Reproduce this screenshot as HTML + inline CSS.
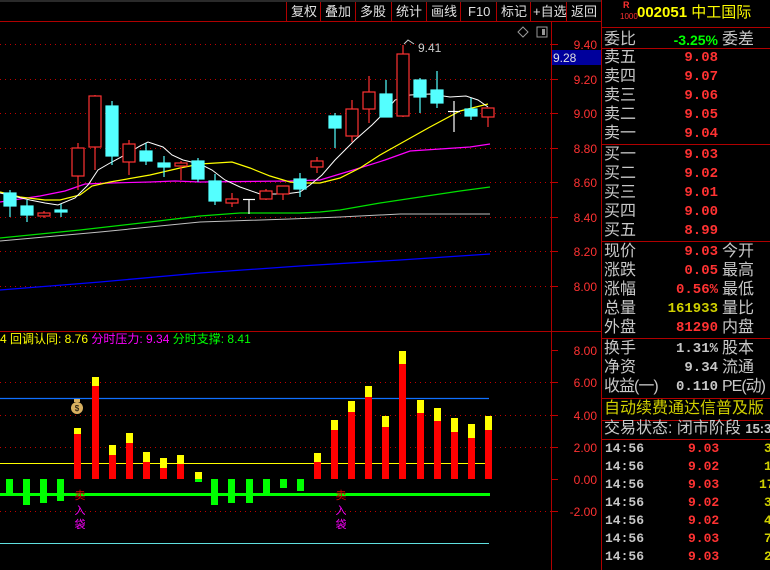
<!DOCTYPE html>
<html><head><meta charset="utf-8"><style>
body{margin:0;background:#000;width:770px;height:570px;overflow:hidden;position:relative;font-family:"Liberation Sans","Noto Sans CJK SC",sans-serif}
.a{position:absolute;white-space:nowrap;line-height:16px}
.lb{color:#c8c8c8;font-size:16px;left:604px}
.nr{color:#ff3232;font-weight:bold;font-size:14px;right:52px;font-family:"Liberation Mono","DejaVu Sans Mono",monospace}
.rl{color:#c8c8c8;font-size:16px;left:722px}
.hl{position:absolute;left:602px;width:168px;height:1px;background:#b00000}
.tk{color:#c8c8c8;font-weight:bold;font-size:13px;left:605px;font-family:"Liberation Mono",monospace}
.tp{color:#ff3232;font-weight:bold;font-size:13px;left:688px;font-family:"Liberation Mono",monospace}
.tv{color:#d0d000;font-weight:bold;font-size:13px;left:758px;font-family:"Liberation Mono",monospace}
</style></head><body>
<svg class="a" style="left:0;top:0;line-height:normal" width="602" height="570" viewBox="0 0 602 570" font-family="Liberation Sans,Noto Sans CJK SC,sans-serif">
<line x1="0" y1="1" x2="602" y2="1" stroke="#555" stroke-width="1"/>
<line x1="0" y1="21.5" x2="602" y2="21.5" stroke="#b00000"/>
<g stroke="#b00000"><line x1="286.5" y1="2" x2="286.5" y2="21"/><line x1="320.5" y1="2" x2="320.5" y2="21"/><line x1="355.5" y1="2" x2="355.5" y2="21"/><line x1="391.5" y1="2" x2="391.5" y2="21"/><line x1="426.5" y1="2" x2="426.5" y2="21"/><line x1="460.5" y1="2" x2="460.5" y2="21"/><line x1="496.5" y1="2" x2="496.5" y2="21"/><line x1="530.5" y1="2" x2="530.5" y2="21"/><line x1="566.5" y1="2" x2="566.5" y2="21"/></g>
<g fill="#e0e0e0" font-size="13"><text x="291" y="16">复权</text><text x="325" y="16">叠加</text><text x="360" y="16">多股</text><text x="396" y="16">统计</text><text x="431" y="16">画线</text><text x="468" y="16">F10</text><text x="501" y="16">标记</text><text x="533" y="16">+自选</text><text x="571" y="16">返回</text></g>
<line x1="551.5" y1="22" x2="551.5" y2="570" stroke="#b00000"/>
<line x1="0" y1="331.5" x2="602" y2="331.5" stroke="#b00000"/>
<g stroke="#c00000" stroke-dasharray="1,4"><line x1="0" y1="44.5" x2="551" y2="44.5"/><line x1="0" y1="79.5" x2="551" y2="79.5"/><line x1="0" y1="113.5" x2="551" y2="113.5"/><line x1="0" y1="148.5" x2="551" y2="148.5"/><line x1="0" y1="182.5" x2="551" y2="182.5"/><line x1="0" y1="217.5" x2="551" y2="217.5"/><line x1="0" y1="251.5" x2="551" y2="251.5"/><line x1="0" y1="286.5" x2="551" y2="286.5"/>
<line x1="0" y1="382.5" x2="551" y2="382.5"/><line x1="0" y1="415.5" x2="551" y2="415.5"/><line x1="0" y1="447.5" x2="551" y2="447.5"/><line x1="0" y1="511.5" x2="551" y2="511.5"/></g>
<g stroke="#c00000"><line x1="552" y1="44.5" x2="558" y2="44.5"/><line x1="552" y1="79.5" x2="558" y2="79.5"/><line x1="552" y1="113.5" x2="558" y2="113.5"/><line x1="552" y1="148.5" x2="558" y2="148.5"/><line x1="552" y1="182.5" x2="558" y2="182.5"/><line x1="552" y1="217.5" x2="558" y2="217.5"/><line x1="552" y1="251.5" x2="558" y2="251.5"/><line x1="552" y1="286.5" x2="558" y2="286.5"/><line x1="552" y1="350.5" x2="558" y2="350.5"/><line x1="552" y1="382.5" x2="558" y2="382.5"/><line x1="552" y1="415.5" x2="558" y2="415.5"/><line x1="552" y1="447.5" x2="558" y2="447.5"/><line x1="552" y1="479.5" x2="558" y2="479.5"/><line x1="552" y1="511.5" x2="558" y2="511.5"/></g>
<g fill="#ff3232" font-size="12" text-anchor="end"><text x="597" y="49">9.40</text><text x="597" y="84">9.20</text><text x="597" y="118">9.00</text><text x="597" y="153">8.80</text><text x="597" y="187">8.60</text><text x="597" y="222">8.40</text><text x="597" y="256">8.20</text><text x="597" y="291">8.00</text>
<text x="597" y="355">8.00</text><text x="597" y="387">6.00</text><text x="597" y="420">4.00</text><text x="597" y="452">2.00</text><text x="597" y="484">0.00</text><text x="597" y="516">-2.00</text></g>
<rect x="552" y="50" width="50" height="15" fill="#00009c"/><text x="553" y="62" fill="#e0e0e0" font-size="12">9.28</text>
<path d="M523 27 L528 32 L523 37 L518 32 Z" fill="none" stroke="#999"/>
<rect x="537" y="27" width="10" height="10" fill="none" stroke="#999"/><rect x="542" y="29" width="3" height="6" fill="#999"/>
<polyline fill="none" stroke="#c0c0c0" stroke-width="1" points="0,241 100,232 200,222 290,219 340,217 400,214 490,214"/>
<polyline fill="none" stroke="#00e000" stroke-width="1.3" points="0,238 80,230 150,222 200,216 240,213 300,213 320,212 340,210 380,203 420,197 460,191 490,187"/>
<polyline fill="none" stroke="#0000ff" stroke-width="1.3" points="0,290 100,282 200,273 300,266 400,260 490,254"/>
<polyline fill="none" stroke="#ff00ff" stroke-width="1.2" points="0,202 40,196 65,191 85,184 110,183 150,182 175,181 200,182 290,181 320,180 350,171 385,160 410,151 440,149 470,147 490,144"/>
<polyline fill="none" stroke="#ffff00" stroke-width="1.2" points="0,192 20,197 45,200 60,200 80,195 92,186 110,182 150,175 180,168 200,164 232,162 250,168 270,176 290,182 300,183 320,183 340,178 360,168 380,155 405,141 430,127 460,111 488,104"/>
<polyline fill="none" stroke="#ffffff" stroke-width="1" points="0,193 30,200 45,203 58,205 75,198 88,185 98,170 110,163 125,155 140,146 148,142 163,147 172,155 183,160 200,164 212,170 225,180 240,187 260,194 285,194 300,192 310,185 322,175 335,160 355,140 372,125 385,112 395,100 410,95 430,94 450,97 466,96 478,100 488,107"/>
<g stroke="#ff3232" stroke-width="1.2" fill="#000">
<line x1="44" y1="211" x2="44" y2="218"/><rect x="38" y="213" width="12" height="3"/>
<line x1="78" y1="143" x2="78" y2="190"/><rect x="72" y="148" width="12" height="28"/>
<line x1="95" y1="95" x2="95" y2="170"/><rect x="89" y="96" width="12" height="51"/>
<line x1="129" y1="140" x2="129" y2="175"/><rect x="123" y="144" width="12" height="18"/>
<line x1="181" y1="161" x2="181" y2="180"/><rect x="175" y="163" width="12" height="3"/>
<line x1="232" y1="193" x2="232" y2="207"/><rect x="226" y="199" width="12" height="4"/>
<line x1="266" y1="189" x2="266" y2="200"/><rect x="260" y="191" width="12" height="8"/>
<line x1="283" y1="186" x2="283" y2="200"/><rect x="277" y="186" width="12" height="8"/>
<line x1="317" y1="157" x2="317" y2="173"/><rect x="311" y="161" width="12" height="6"/>
<line x1="352" y1="100" x2="352" y2="142"/><rect x="346" y="109" width="12" height="27"/>
<line x1="369" y1="76" x2="369" y2="123"/><rect x="363" y="92" width="12" height="17"/>
<line x1="403" y1="45" x2="403" y2="117"/><rect x="397" y="54" width="12" height="62"/>
<line x1="488" y1="108" x2="488" y2="127"/><rect x="482" y="108" width="12" height="9"/>
</g>
<g stroke="#54ffff" stroke-width="1.2" fill="#54ffff">
<line x1="10" y1="190" x2="10" y2="217"/><rect x="4" y="193" width="12" height="13"/>
<line x1="27" y1="200" x2="27" y2="222"/><rect x="21" y="206" width="12" height="9"/>
<line x1="61" y1="204" x2="61" y2="217"/><rect x="55" y="210" width="12" height="2"/>
<line x1="112" y1="101" x2="112" y2="165"/><rect x="106" y="106" width="12" height="50"/>
<line x1="146" y1="143" x2="146" y2="165"/><rect x="140" y="151" width="12" height="10"/>
<line x1="164" y1="156" x2="164" y2="177"/><rect x="158" y="163" width="12" height="4"/>
<line x1="198" y1="158" x2="198" y2="182"/><rect x="192" y="161" width="12" height="18"/>
<line x1="215" y1="174" x2="215" y2="205"/><rect x="209" y="181" width="12" height="20"/>
<line x1="300" y1="173" x2="300" y2="197"/><rect x="294" y="179" width="12" height="10"/>
<line x1="335" y1="113" x2="335" y2="148"/><rect x="329" y="116" width="12" height="12"/>
<line x1="386" y1="80" x2="386" y2="117"/><rect x="380" y="94" width="12" height="23"/>
<line x1="420" y1="78" x2="420" y2="113"/><rect x="414" y="80" width="12" height="17"/>
<line x1="437" y1="71" x2="437" y2="108"/><rect x="431" y="90" width="12" height="13"/>
<line x1="471" y1="98" x2="471" y2="120"/><rect x="465" y="109" width="12" height="7"/>
</g>
<g stroke="#fff" stroke-width="1.2"><line x1="249" y1="199" x2="249" y2="214"/><line x1="243" y1="199.5" x2="255" y2="199.5"/><line x1="454" y1="101" x2="454" y2="132"/><line x1="448" y1="111.5" x2="460" y2="111.5"/></g>
<path d="M404 44 L408 40 L414 44" fill="none" stroke="#ccc"/><text x="418" y="52" fill="#ccc" font-size="12">9.41</text>
<text x="0" y="343" font-size="12"><tspan fill="#ffff00">4 回调认同: 8.76 </tspan><tspan fill="#ff00ff">分时压力: 9.34 </tspan><tspan fill="#00ff00">分时支撑: 8.41</tspan></text>
<line x1="0" y1="398.5" x2="489" y2="398.5" stroke="#1070ff" stroke-width="1.2"/>
<line x1="0" y1="463.5" x2="489" y2="463.5" stroke="#ffff00" stroke-width="1"/>
<line x1="0" y1="543.5" x2="489" y2="543.5" stroke="#60e0e0" stroke-width="1"/>
<g fill="#00ff00"><rect x="6" y="479" width="7" height="17"/><rect x="23" y="479" width="7" height="26"/><rect x="40" y="479" width="7" height="24"/><rect x="57" y="479" width="7" height="22"/><rect x="211" y="479" width="7" height="26"/><rect x="228" y="479" width="7" height="24"/><rect x="246" y="479" width="7" height="24"/><rect x="263" y="479" width="7" height="15"/><rect x="280" y="479" width="7" height="9"/><rect x="297" y="479" width="7" height="12"/><rect x="195" y="479" width="7" height="3"/></g>
<rect x="0" y="493" width="490" height="3" fill="#00ff00"/>
<g fill="#ff0000"><rect x="74" y="434" width="7" height="45"/><rect x="92" y="386" width="7" height="93"/><rect x="109" y="455" width="7" height="24"/><rect x="126" y="443" width="7" height="36"/><rect x="143" y="462" width="7" height="17"/><rect x="160" y="468" width="7" height="11"/><rect x="177" y="464" width="7" height="15"/><rect x="314" y="462" width="7" height="17"/><rect x="331" y="430" width="7" height="49"/><rect x="348" y="412" width="7" height="67"/><rect x="365" y="397" width="7" height="82"/><rect x="382" y="427" width="7" height="52"/><rect x="399" y="364" width="7" height="115"/><rect x="417" y="413" width="7" height="66"/><rect x="434" y="421" width="7" height="58"/><rect x="451" y="432" width="7" height="47"/><rect x="468" y="438" width="7" height="41"/><rect x="485" y="430" width="7" height="49"/></g>
<g fill="#ffff00"><rect x="74" y="428" width="7" height="6"/><rect x="92" y="377" width="7" height="9"/><rect x="109" y="445" width="7" height="10"/><rect x="126" y="433" width="7" height="10"/><rect x="143" y="452" width="7" height="10"/><rect x="160" y="458" width="7" height="10"/><rect x="177" y="455" width="7" height="9"/><rect x="195" y="472" width="7" height="7"/><rect x="314" y="453" width="7" height="9"/><rect x="331" y="420" width="7" height="10"/><rect x="348" y="401" width="7" height="11"/><rect x="365" y="386" width="7" height="11"/><rect x="382" y="416" width="7" height="11"/><rect x="399" y="351" width="7" height="13"/><rect x="417" y="400" width="7" height="13"/><rect x="434" y="408" width="7" height="13"/><rect x="451" y="418" width="7" height="14"/><rect x="468" y="424" width="7" height="14"/><rect x="485" y="416" width="7" height="14"/></g>
<circle cx="77" cy="408" r="6" fill="#d8b060"/><rect x="74" y="399" width="6" height="3" fill="#d8b060"/><text x="77" y="411" font-size="8" text-anchor="middle" fill="#000">$</text>
<g font-size="11" text-anchor="middle"><text x="80" y="499" fill="#e00000">卖</text><text x="80" y="514" fill="#ff00ff">入</text><text x="80" y="528" fill="#ff00ff">袋</text><text x="341" y="499" fill="#e00000">卖</text><text x="341" y="514" fill="#ff00ff">入</text><text x="341" y="528" fill="#ff00ff">袋</text></g>
<line x1="601.5" y1="0" x2="601.5" y2="570" stroke="#b00000"/>
</svg>
<div class="a" style="left:623px;top:0px;color:#ff3232;font-size:9px;font-weight:bold;line-height:10px">R</div>
<div class="a" style="left:620px;top:12px;color:#ff3232;font-size:8px;line-height:10px">1000</div>
<div class="a" style="left:637px;top:5px;color:#ffff00;font-size:15px;font-weight:bold">002051 <span style="font-weight:normal">中工国际</span></div>
<div class="hl" style="top:27px"></div>
<div class="a lb" style="top:32px">委比</div><div class="a" style="top:32px;right:52px;color:#00ff00;font-weight:bold;font-size:14px;line-height:16px">-3.25%</div><div class="a rl" style="top:32px">委差</div>
<div class="hl" style="top:48px"></div>
<div class="a lb" style="top:50px">卖五</div><div class="a nr" style="top:50px">9.08</div>
<div class="a lb" style="top:69px">卖四</div><div class="a nr" style="top:69px">9.07</div>
<div class="a lb" style="top:88px">卖三</div><div class="a nr" style="top:88px">9.06</div>
<div class="a lb" style="top:107px">卖二</div><div class="a nr" style="top:107px">9.05</div>
<div class="a lb" style="top:126px">卖一</div><div class="a nr" style="top:126px">9.04</div>
<div class="hl" style="top:144px"></div>
<div class="a lb" style="top:147px">买一</div><div class="a nr" style="top:147px">9.03</div>
<div class="a lb" style="top:166px">买二</div><div class="a nr" style="top:166px">9.02</div>
<div class="a lb" style="top:185px">买三</div><div class="a nr" style="top:185px">9.01</div>
<div class="a lb" style="top:204px">买四</div><div class="a nr" style="top:204px">9.00</div>
<div class="a lb" style="top:223px">买五</div><div class="a nr" style="top:223px">8.99</div>
<div class="hl" style="top:241px"></div>
<div class="a lb" style="top:244px">现价</div><div class="a nr" style="top:244px">9.03</div><div class="a rl" style="top:244px">今开</div>
<div class="a lb" style="top:263px">涨跌</div><div class="a nr" style="top:263px">0.05</div><div class="a rl" style="top:263px">最高</div>
<div class="a lb" style="top:282px">涨幅</div><div class="a nr" style="top:282px">0.56%</div><div class="a rl" style="top:282px">最低</div>
<div class="a lb" style="top:301px">总量</div><div class="a nr" style="top:301px;color:#d0d000">161933</div><div class="a rl" style="top:301px">量比</div>
<div class="a lb" style="top:320px">外盘</div><div class="a nr" style="top:320px">81290</div><div class="a rl" style="top:320px">内盘</div>
<div class="hl" style="top:338px"></div>
<div class="a lb" style="top:341px">换手</div><div class="a nr" style="top:341px;color:#c8c8c8">1.31%</div><div class="a rl" style="top:341px">股本</div>
<div class="a lb" style="top:360px">净资</div><div class="a nr" style="top:360px;color:#c8c8c8">9.34</div><div class="a rl" style="top:360px">流通</div>
<div class="a lb" style="top:379px;letter-spacing:-1px">收益(一)</div><div class="a nr" style="top:379px;color:#c8c8c8">0.110</div><div class="a rl" style="top:379px;letter-spacing:-1px">PE(动)</div>
<div class="hl" style="top:398px"></div>
<div class="a" style="left:604px;top:401px;color:#d0d000;font-size:16px">自动续费通达信普及版</div>
<div class="hl" style="top:420px"></div>
<div class="a" style="left:604px;top:421px;color:#c8c8c8;font-size:16px">交易状态: 闭市阶段 <b style="font-size:13px">15:3</b></div>
<div class="hl" style="top:439px"></div>
<div class="a tk" style="top:441px">14:56</div><div class="a tp" style="top:441px">9.03</div><div class="a tv" style="top:441px;left:764px">3</div>
<div class="a tk" style="top:459px">14:56</div><div class="a tp" style="top:459px">9.02</div><div class="a tv" style="top:459px;left:764px">1</div>
<div class="a tk" style="top:477px">14:56</div><div class="a tp" style="top:477px">9.03</div><div class="a tv" style="top:477px;left:759px">17</div>
<div class="a tk" style="top:495px">14:56</div><div class="a tp" style="top:495px">9.02</div><div class="a tv" style="top:495px;left:764px">3</div>
<div class="a tk" style="top:513px">14:56</div><div class="a tp" style="top:513px">9.02</div><div class="a tv" style="top:513px;left:764px">4</div>
<div class="a tk" style="top:531px">14:56</div><div class="a tp" style="top:531px">9.03</div><div class="a tv" style="top:531px;left:764px">7</div>
<div class="a tk" style="top:549px">14:56</div><div class="a tp" style="top:549px">9.03</div><div class="a tv" style="top:549px;left:764px">2</div>
</body></html>
